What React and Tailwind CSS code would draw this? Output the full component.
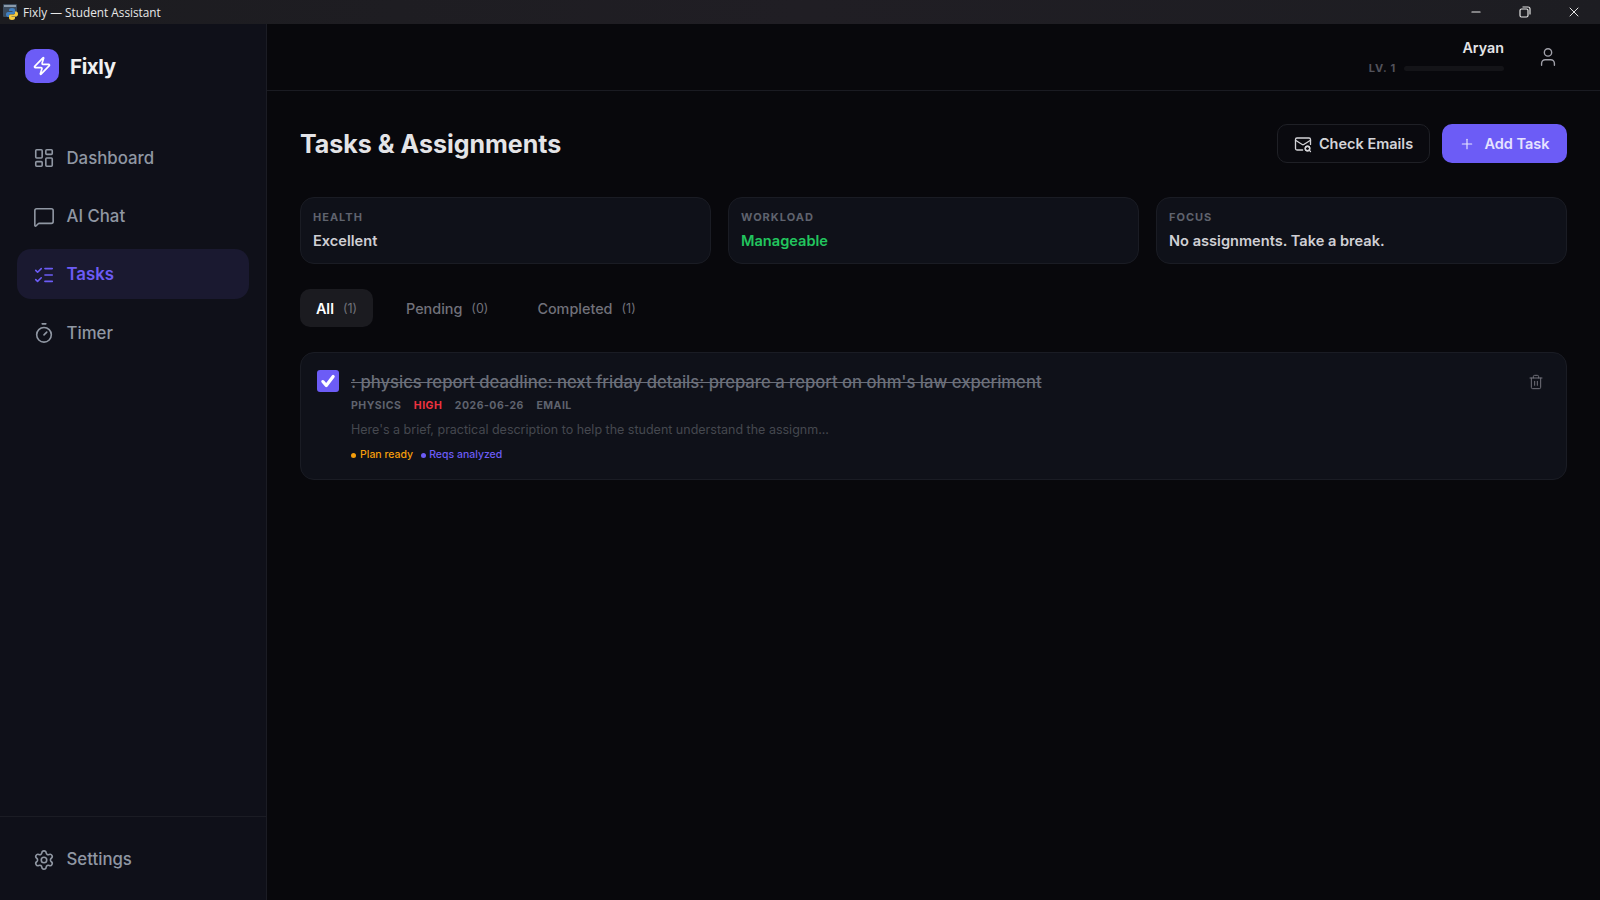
import React from "react";
import { LayoutDashboard, ListChecks, MailSearch, MessageSquare, Minus, Plus, Settings, Timer, Trash2, User, X, Zap } from "lucide-react";

const navItems = [
  { label: "Dashboard", icon: LayoutDashboard },
  { label: "AI Chat", icon: MessageSquare },
  { label: "Tasks", icon: ListChecks, active: true },
  { label: "Timer", icon: Timer },
];

const stats = [
  { label: "HEALTH", value: "Excellent", color: "text-[#cfcfd4]" },
  { label: "WORKLOAD", value: "Manageable", color: "text-[#22c55e]" },
  { label: "FOCUS", value: "No assignments. Take a break.", color: "text-[#cfcfd4]" },
];

const PythonIcon = () => (
  <svg width="16" height="16" viewBox="0 0 16 16">
    <rect x="0" y="0" width="14" height="13" rx="1" fill="#3a4a5c" />
    <rect x="1" y="1" width="12" height="2" fill="#8a9aaa" />
    <path d="M9 4c-2 0-3 .7-3 2v1h3.500v1H5c-1.400 0-2 1-2 2.500S3.700 13 5 13h1v-1.500C6 10.500 7 10 8 10h2.500c1 0 1.500-.7 1.500-1.500V6c0-1.200-1-2-3-2z" fill="#3f7fc0" />
    <path d="M9 16c2 0 3-.7 3-2v-1H8.500v-.5H13c1.400 0 2-1 2-2.500s-.7-2.500-2-2.500h-1v1.500c0 1-1 1.500-2 1.500H7.500C6.500 10.500 6 11.200 6 12v2c0 1.200 1 2 3 2z" fill="#f5c93e" />
  </svg>
);

const RestoreIcon = () => (
  <svg width="12" height="12" viewBox="0 0 12 12" fill="none" stroke="#e5e5e5" strokeWidth="1.200">
    <rect x="1" y="3" width="8" height="8" rx="1.500" />
    <path d="M3.500 1h5.500a2 2 0 0 1 2 2v5.500" />
  </svg>
);

const TitleBar = () => (
  <div className="flex h-6 shrink-0 items-center justify-between bg-gradient-to-r from-[#1c1c20] via-[#201e24] to-[#1d1d22] pl-[3px] pr-[2px]">
    <div className="flex items-center gap-[1px]">
      <PythonIcon />
      <span className="ml-[3px] pt-[1px] font-['Open_Sans',sans-serif] text-[11.800px] text-[#e8e8e8]">Fixly — Student Assistant</span>
    </div>
    <div className="flex items-center">
      <div className="flex w-[49px] justify-center">
        <Minus className="h-[14px] w-[14px] text-[#e5e5e5]" strokeWidth={2} />
      </div>
      <div className="flex w-[49px] justify-center">
        <RestoreIcon />
      </div>
      <div className="flex w-[49px] justify-center">
        <X className="h-4 w-4 text-[#e5e5e5]" strokeWidth={1.500} />
      </div>
    </div>
  </div>
);

const Sidebar = () => (
  <aside className="flex w-[267px] shrink-0 flex-col border-r border-[#1b1c24] bg-[#0f1019]">
    <div className="flex items-center gap-[11px] pl-[25px] pt-[25px]">
      <div className="flex h-[34px] w-[34px] items-center justify-center rounded-[10px] bg-[#6c5cf6]">
        <Zap className="h-[20px] w-[20px] text-white" strokeWidth={2} />
      </div>
      <span className="pt-[2px] text-[20.500px] font-bold tracking-[-0.4px] text-[#f0f0f2]">Fixly</span>
    </div>
    <nav className="mt-[49px] flex flex-1 flex-col gap-2 px-[17px]">
      {navItems.map((item) => (
        <div
          key={item.label}
          className={`flex h-[50.400px] items-center gap-[11.500px] rounded-[14px] pl-[16px] pt-[2px] text-[16.800px] font-medium ${
            item.active ? "bg-[#1a1930] font-semibold text-[#6c5cf6]" : "text-[#9097a3]"
          }`}
        >
          <item.icon className="h-[22px] w-[22px]" strokeWidth={1.750} />
          {item.label}
        </div>
      ))}
    </nav>
    <div className="flex h-[84px] items-center gap-[11.500px] border-t border-[#1b1c24] pl-[33px] pt-[2px] text-[16.800px] font-medium text-[#9097a3]">
      <Settings className="h-[22px] w-[22px]" strokeWidth={1.750} />
      Settings
    </div>
  </aside>
);

const TopBar = () => (
  <header className="flex h-[67px] shrink-0 items-center justify-end border-b border-[#1a1b22] pr-[41px]">
    <div className="flex flex-col items-end pt-[1px]">
      <span className="text-[14.300px] font-semibold leading-[18px] text-[#e4e4e7]">Aryan</span>
      <div className="mt-[3px] flex items-center gap-[8px]">
        <span className="text-[11px] font-bold tracking-[0.8px] text-[#52525b]">LV. 1</span>
        <div className="h-[5px] w-[100px] rounded-full bg-[#141418]" />
      </div>
    </div>
    <User className="ml-[33px] h-[22px] w-[22px] text-[#a1a1aa]" strokeWidth={1.500} />
  </header>
);

const TaskCard = () => (
  <div className="mt-[25px] flex rounded-[14px] border border-[#1a1c24] bg-[#0f1119] pb-[16px] pl-[16px] pr-[22px] pt-[17px]">
    <div className="flex h-[22px] w-[22px] shrink-0 items-center justify-center rounded-[3px] bg-[#6c5cf6]">
      <svg width="16" height="16" viewBox="0 0 14 14" fill="none" stroke="white" strokeWidth="2.800" strokeLinecap="round" strokeLinejoin="round">
        <path d="M2.500 7.500 5.500 11 11.500 3" />
      </svg>
    </div>
    <div className="ml-[12px] flex-1 pt-[1px]">
      <div className="text-[16.650px] font-medium leading-[22px] text-[#6b6f7a] line-through">
        : physics report deadline: next friday details: prepare a report on ohm's law experiment
      </div>
      <div className="mt-[5px] flex gap-[12.500px] text-[10.500px] font-bold leading-[16px] tracking-[0.5px] text-[#5f636e]">
        <span>PHYSICS</span>
        <span className="text-[#ef3340]">HIGH</span>
        <span>2026-06-26</span>
        <span>EMAIL</span>
      </div>
      <p className="mt-[7px] text-[12.500px] leading-[18px] text-[#45484f]">
        Here's a brief, practical description to help the student understand the assignm...
      </p>
      <div className="mt-[8px] flex gap-[8px] text-[10.500px] font-medium leading-[16px]">
        <span className="flex items-center gap-[4px] text-[#f59e0b]">
          <span className="h-[5px] w-[5px] rounded-full bg-[#f59e0b]" />
          Plan ready
        </span>
        <span className="flex items-center gap-[3px] text-[#6c5cf6]">
          <span className="h-[5px] w-[5px] rounded-full bg-[#6c5cf6]" />
          Reqs analyzed
        </span>
      </div>
    </div>
    <Trash2 className="mt-[4px] h-4 w-4 text-[#71717a]" strokeWidth={1.500} />
  </div>
);

export default function App() {
  return (
    <div className="flex h-[900px] w-[1600px] flex-col overflow-hidden bg-[#07070b] font-['Inter',sans-serif]">
      <TitleBar />
      <div className="flex min-h-0 flex-1">
        <Sidebar />
        <main className="flex flex-1 flex-col bg-[#08080c]">
          <TopBar />
          <div className="px-[33px] pt-[33px]">
            <div className="flex h-[40px] items-start justify-between">
              <h1 className="self-center pt-[2px] text-[25px] font-bold text-[#e4e4e7]">Tasks & Assignments</h1>
              <div className="flex gap-[12px]">
                <button className="flex h-[39px] w-[153px] items-center justify-center gap-[7px] rounded-[10px] border border-[#1f2026] bg-[#0a0a0f] text-[14.500px] font-semibold text-[#d4d4d8]">
                  <MailSearch className="h-[18px] w-[18px]" strokeWidth={1.750} />
                  Check Emails
                </button>
                <button className="flex h-[39px] w-[125px] items-center justify-center gap-[9px] rounded-[10px] bg-[#6c5cf6] text-[14.500px] font-semibold text-[#e6e3ff]">
                  <Plus className="h-[16px] w-[16px]" strokeWidth={1.750} />
                  Add Task
                </button>
              </div>
            </div>
            <div className="mt-[33px] grid grid-cols-3 gap-[17px]">
              {stats.map((s) => (
                <div key={s.label} className="h-[67px] rounded-[14px] border border-[#1a1c24] bg-[#0f1119] px-[12px] pt-[11px]">
                  <div className="text-[11px] font-bold leading-[16px] tracking-[1px] text-[#5f636e]">{s.label}</div>
                  <div className={`mt-[4px] text-[14.600px] font-semibold leading-[24px] ${s.color}`}>{s.value}</div>
                </div>
              ))}
            </div>
            <div className="mt-[25px] flex items-center gap-[16px] text-[14.400px] font-medium text-[#71717a]">
              <div className="flex h-[38px] w-[73px] items-center justify-center gap-[9px] rounded-[10px] bg-[#1b1b20] pt-[1px] font-semibold text-white">
                All <span className="pt-[1px] text-[12.500px] font-normal text-[#71717a]">(1)</span>
              </div>
              <div className="flex h-[38px] items-center gap-[9px] px-[17px] pt-[1px]">
                Pending <span className="pt-[1px] text-[12.500px] font-normal">(0)</span>
              </div>
              <div className="-ml-[1px] flex h-[38px] items-center gap-[9px] px-[17px] pt-[1px]">
                Completed <span className="pt-[1px] text-[12.500px] font-normal">(1)</span>
              </div>
            </div>
            <TaskCard />
          </div>
        </main>
      </div>
    </div>
  );
}
